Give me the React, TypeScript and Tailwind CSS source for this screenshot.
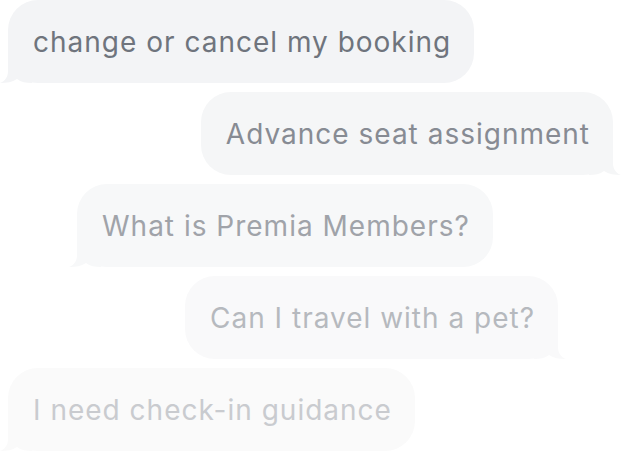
import React from "react";

type B = { text: string; side: "l" | "r"; cls: string; fill: string; txt: string };

function Tail({ side, fill }: { side: "l" | "r"; fill: string }) {
  const d = "M8 0 L8 20 C8 26 5 30 0 32 C7 32 12 31 17 28 C21 31 26 32 32 32 L32 0 Z";
  return (
    <svg
      width="32"
      height="32"
      viewBox="0 0 32 32"
      className={side === "l" ? `absolute -left-[8px] bottom-0 ${fill}` : `absolute -right-[8px] bottom-0 -scale-x-100 ${fill}`}
    >
      <path d={d} fill="currentColor" />
    </svg>
  );
}

const items: B[] = [
  { text: "change or cancel my booking", side: "l", cls: "self-start ml-[8px] bg-[#f3f4f6]", fill: "text-[#f3f4f6]", txt: "text-[#6f747d]" },
  { text: "Advance seat assignment", side: "r", cls: "self-end mr-[11px] bg-[#f5f6f7]", fill: "text-[#f5f6f7]", txt: "text-[#878b93]" },
  { text: "What is Premia Members?", side: "l", cls: "self-start ml-[77px] bg-[#f7f8f9]", fill: "text-[#f7f8f9]", txt: "text-[#a0a3a9]" },
  { text: "Can I travel with a pet?", side: "r", cls: "self-end mr-[66px] bg-[#f9f9fa]", fill: "text-[#f9f9fa]", txt: "text-[#b6b9be]" },
  { text: "I need check-in guidance", side: "l", cls: "self-start ml-[8px] bg-[#fafafa]", fill: "text-[#fafafa]", txt: "text-[#c9cbcf]" },
];

export default function App() {
  return (
    <div className="w-[624px] h-[453px] bg-white overflow-hidden flex flex-col gap-[9px] font-['Inter','Noto_Sans',sans-serif]">
      {items.map((it) => (
        <div
          key={it.text}
          className={`relative h-[83px] shrink-0 rounded-[30px] pl-[25px] pr-[23px] flex items-center ${it.cls}`}
        >
          <Tail side={it.side} fill={it.fill} />
          <span className={`relative text-[28px] leading-none tracking-[1px] whitespace-nowrap ${it.txt}`}>
            {it.text}
          </span>
        </div>
      ))}
    </div>
  );
}
